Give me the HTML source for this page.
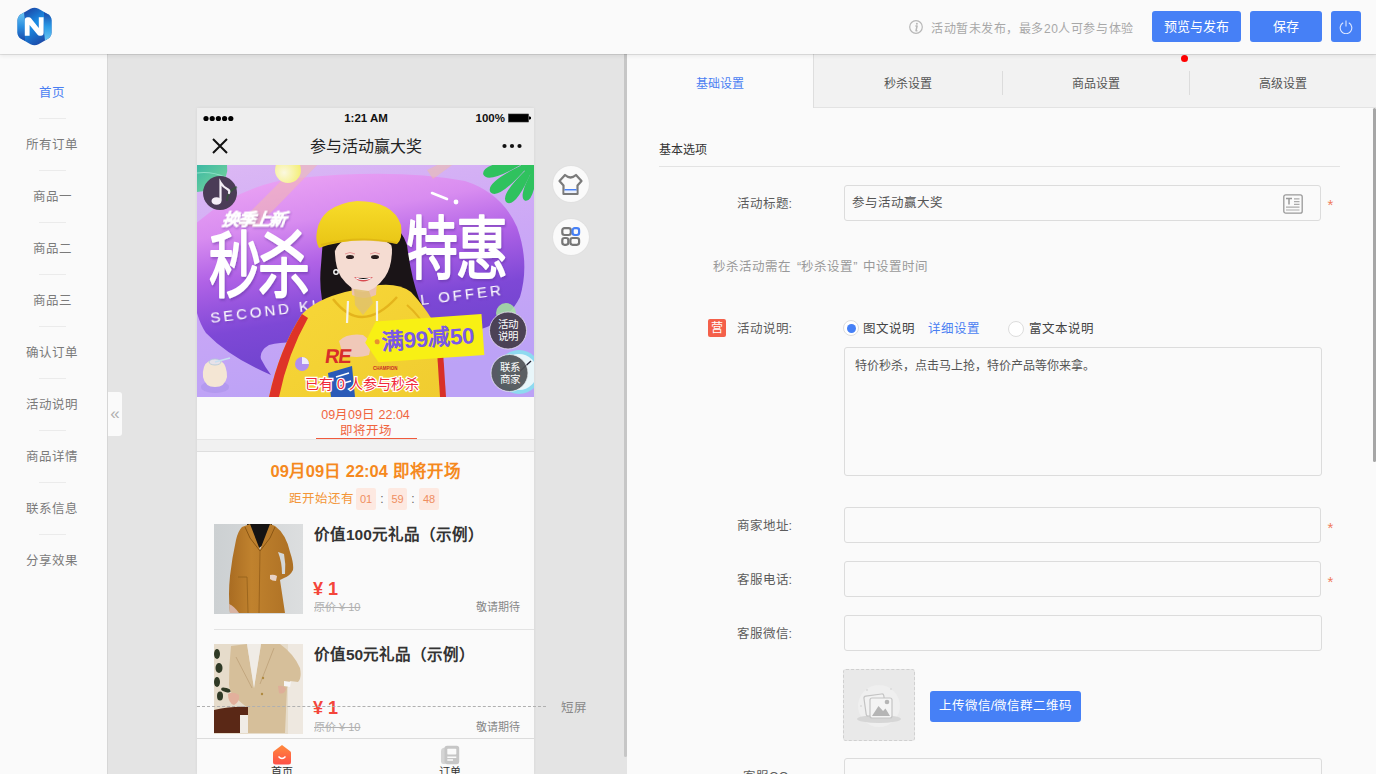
<!DOCTYPE html>
<html lang="zh-CN"><head><meta charset="utf-8">
<style>
*{box-sizing:border-box;margin:0;padding:0}
html,body{width:1376px;height:774px;overflow:hidden;background:#fafafa;font-family:"Liberation Sans",sans-serif;font-size:13px;color:#333}
.abs{position:absolute}
#header{left:0;top:0;width:1376px;height:54px;background:#fafafa;z-index:5;box-shadow:0 1px 0 rgba(0,0,0,0.09),0 2px 4px rgba(0,0,0,0.07)}
#side{left:0;top:54px;width:108px;height:720px;background:#fafafa;border-right:1px solid #d6d6d6}
.mi{position:absolute;left:0;width:104px;text-align:center;font-size:12.5px;color:#777;line-height:16px}
.md{position:absolute;left:39px;width:27px;height:1px;background:#ebebeb}
#mid{left:108px;top:54px;width:519px;height:720px;background:#e4e4e4}
#divbar{left:624px;top:54px;width:3px;height:703px;background:#c6c6c6;border-radius:0 0 2px 2px}
#right{left:627px;top:54px;width:749px;height:720px;background:#fafafa}
.btn{position:absolute;background:#4680f6;color:#fff;border-radius:3px;text-align:center;font-size:13px}
.tab{position:absolute;top:0;height:54px;line-height:60px;text-align:center;font-size:12px;color:#555}
.lbl{position:absolute;font-size:12.5px;color:#5c5c5c;text-align:right;width:120px;left:672px;line-height:16px}
.inp{position:absolute;left:844px;width:477px;height:36px;border:1px solid #dcdcdc;border-radius:3px;background:#fafafa}
.star{position:absolute;left:1327.5px;color:#f07a5a;font-size:15px;line-height:16px}
#phone{left:197px;top:108px;width:337px;height:666px;background:#fafafa;overflow:hidden;box-shadow:0 0 3px rgba(0,0,0,0.07)}
</style></head>
<body>
<!-- HEADER -->
<div id="header" class="abs">
  <svg class="abs" style="left:16px;top:7px" width="37" height="40" viewBox="0 0 37 40">
    <defs>
      <linearGradient id="lg1" x1="0.2" y1="0" x2="0.8" y2="1">
        <stop offset="0" stop-color="#1b3c9c"/><stop offset="0.45" stop-color="#1a8ee6"/><stop offset="1" stop-color="#1c3f9e"/>
      </linearGradient>
      <linearGradient id="lg2" x1="0" y1="0" x2="0" y2="1">
        <stop offset="0" stop-color="#6cc6f2"/><stop offset="0.5" stop-color="#2a8ee0"/><stop offset="1" stop-color="#1b48a8"/>
      </linearGradient>
      <linearGradient id="lg3" x1="0" y1="0" x2="0" y2="1">
        <stop offset="0" stop-color="#1b48a8"/><stop offset="0.5" stop-color="#2a9ae6"/><stop offset="1" stop-color="#6cc6f2"/>
      </linearGradient>
    </defs>
    <path d="M14.5 1.8 Q18.5 -0.2 22.5 1.8 L32 7.3 Q35.5 9.5 35.5 13.5 L35.5 25.5 Q35.5 29.5 32 31.7 L22.5 37.2 Q18.5 39.2 14.5 37.2 L5 31.7 Q1.5 29.5 1.5 25.5 L1.5 13.5 Q1.5 9.5 5 7.3 Z" fill="url(#lg1)"/>
    <path d="M1.5 13.5 Q1.5 9.5 5 7.3 L8 5.6 Q9 12 9 20 L9 33.8 L5 31.7 Q1.5 29.5 1.5 25.5 Z" fill="url(#lg2)"/>
    <path d="M35.5 25.5 Q35.5 29.5 32 31.7 L29 33.4 Q28 27 28 19 L28 5.2 L32 7.3 Q35.5 9.5 35.5 13.5 Z" fill="url(#lg3)"/>
    <path d="M8.8 13.5 Q8.8 10.2 11.5 10.2 L13 10.2 Q14.2 10.2 15 11.2 L22.8 21 L22.8 10.2 L27.6 10.2 L27.6 25.8 Q27.6 28.8 25 28.8 L23.6 28.8 Q22.4 28.8 21.6 27.8 L13.6 18 L13.6 28.8 L8.8 28.8 Z" fill="#fff"/>
  </svg>
  <svg class="abs" style="left:909px;top:20px" width="14" height="14" viewBox="0 0 14 14">
    <circle cx="7" cy="7" r="6.3" fill="none" stroke="#b8b8b8" stroke-width="1.2"/>
    <circle cx="7.9" cy="3.8" r="1" fill="#b8b8b8"/>
    <path d="M6.4 6 L8.1 6 L7 10.7 L8.4 10.7" fill="none" stroke="#b8b8b8" stroke-width="1.5" stroke-linejoin="round"/>
  </svg>
  <div class="abs" style="left:931px;top:20.5px;font-size:12px;letter-spacing:0.55px;color:#a8a8a8;line-height:16px;white-space:nowrap">活动暂未发布，最多20人可参与体验</div>
  <div class="btn" style="left:1152px;top:11px;width:89px;height:31px;line-height:31px">预览与发布</div>
  <div class="btn" style="left:1250px;top:11px;width:72px;height:31px;line-height:31px">保存</div>
  <div class="btn" style="left:1331px;top:11px;width:30px;height:31px">
    <svg class="abs" style="left:8px;top:9px" width="14" height="14" viewBox="0 0 14 14">
      <path d="M4.2 2.8 A5.8 5.8 0 1 0 9.8 2.8" fill="none" stroke="#dfe8ff" stroke-width="1.1"/>
      <path d="M7 0.5 L7 6.5" stroke="#dfe8ff" stroke-width="1.1"/>
    </svg>
  </div>
</div>

<!-- SIDEBAR -->
<div id="side" class="abs"></div>
<div class="mi" style="top:84.5px;color:#4a7ff2">首页</div>
<div class="md" style="top:118px"></div>
<div class="mi" style="top:136.5px;color:#7a7a7a">所有订单</div>
<div class="md" style="top:170px"></div>
<div class="mi" style="top:188.5px;color:#7a7a7a">商品一</div>
<div class="md" style="top:222px"></div>
<div class="mi" style="top:240.5px;color:#7a7a7a">商品二</div>
<div class="md" style="top:274px"></div>
<div class="mi" style="top:292.5px;color:#7a7a7a">商品三</div>
<div class="md" style="top:326px"></div>
<div class="mi" style="top:344.5px;color:#7a7a7a">确认订单</div>
<div class="md" style="top:378px"></div>
<div class="mi" style="top:396.5px;color:#7a7a7a">活动说明</div>
<div class="md" style="top:430px"></div>
<div class="mi" style="top:448.5px;color:#7a7a7a">商品详情</div>
<div class="md" style="top:482px"></div>
<div class="mi" style="top:500.5px;color:#7a7a7a">联系信息</div>
<div class="md" style="top:534px"></div>
<div class="mi" style="top:552.5px;color:#7a7a7a">分享效果</div>
<div class="abs" style="left:108px;top:392px;width:14px;height:44px;background:#fafafa;border-radius:0 3px 3px 0;color:#b0b0b0;font-size:17px;line-height:44px;text-align:center;z-index:3">«</div>

<!-- MIDDLE -->
<div id="mid" class="abs"></div>
<div id="divbar" class="abs"></div>

<!-- RIGHT PANEL -->
<div id="right" class="abs"></div>
<div class="abs" style="left:627px;top:54px;width:749px;height:54px;background:#f2f2f2;border-bottom:1px solid #e3e3e3"></div>
<div class="abs" style="left:627px;top:54px;width:187px;height:54px;background:#fafafa;border-right:1px solid #dedede"></div>
<div class="tab" style="left:627px;top:54px;width:186px;color:#4a7ff2">基础设置</div>
<div class="tab" style="left:814px;top:54px;width:188px">秒杀设置</div>
<div class="abs" style="left:1002px;top:71px;width:1px;height:24px;background:#dcdcdc"></div>
<div class="tab" style="left:1003px;top:54px;width:186px">商品设置</div>
<div class="abs" style="left:1189px;top:71px;width:1px;height:24px;background:#dcdcdc"></div>
<div class="tab" style="left:1190px;top:54px;width:186px">高级设置</div>
<div class="abs" style="left:1181px;top:55px;width:7px;height:7px;border-radius:50%;background:#f00"></div>
<div class="abs" style="left:1373px;top:108px;width:3px;height:354px;background:#a6a6a6;border-radius:2px"></div>

<div class="abs" style="left:659px;top:142px;font-size:12px;color:#333;line-height:16px">基本选项</div>
<div class="abs" style="left:659px;top:166px;width:681px;height:1px;background:#e3e3e3"></div>

<div class="lbl" style="top:196px">活动标题:</div>
<div class="inp" style="top:185px"></div>
<div class="abs" style="left:852px;top:195px;font-size:12.5px;color:#555;line-height:16px">参与活动赢大奖</div>
<svg class="abs" style="left:1283px;top:194px" width="20" height="20" viewBox="0 0 20 20">
  <rect x="0.8" y="0.8" width="18.4" height="18.4" rx="2" fill="none" stroke="#999" stroke-width="1.3"/>
  <path d="M3 4.5 H9 M6 4.5 V10.5" stroke="#999" stroke-width="1.5"/>
  <path d="M11 4.8 H16.5 M11 7.6 H16.5 M11 10.4 H16.5 M3 13.2 H16.5 M3 16 H16.5" stroke="#aaa" stroke-width="1.2"/>
</svg>
<div class="star" style="top:196.5px">*</div>

<div class="abs" style="left:713px;top:259px;font-size:12.5px;color:#999;line-height:16px">秒杀活动需在<span style="margin-left:6px">“</span>秒杀设置<span style="margin-right:6px">”</span>中设置时间</div>

<div class="abs" style="left:708px;top:319px;width:18px;height:18px;background:#f4604a;border-radius:2px;color:#fff;font-size:12px;line-height:18px;text-align:center">营</div>
<div class="lbl" style="top:321px">活动说明:</div>
<div class="abs" style="left:843px;top:320px;width:16px;height:16px;border-radius:50%;border:1px solid #ddd;background:#fff"></div>
<div class="abs" style="left:846.5px;top:323.5px;width:9px;height:9px;border-radius:50%;background:#4680f6"></div>
<div class="abs" style="left:863px;top:321px;font-size:12.5px;color:#444;line-height:16px">图文说明</div>
<div class="abs" style="left:928px;top:321px;font-size:12.5px;color:#4a7ff2;line-height:16px">详细设置</div>
<div class="abs" style="left:1008px;top:321px;width:16px;height:16px;border-radius:50%;border:1px solid #ddd;background:#fff"></div>
<div class="abs" style="left:1029px;top:321px;font-size:12.5px;color:#444;line-height:16px">富文本说明</div>
<div class="abs" style="left:844px;top:347px;width:478px;height:129px;border:1px solid #dcdcdc;border-radius:3px;background:#fafafa"></div>
<div class="abs" style="left:855px;top:358px;font-size:12px;color:#555;line-height:16px">特价秒杀，点击马上抢，特价产品等你来拿。</div>

<div class="lbl" style="top:518px">商家地址:</div>
<div class="inp" style="top:507px"></div>
<div class="star" style="top:519.5px">*</div>
<div class="lbl" style="top:572px">客服电话:</div>
<div class="inp" style="top:561px"></div>
<div class="star" style="top:573.5px">*</div>
<div class="lbl" style="top:626px">客服微信:</div>
<div class="inp" style="top:615px;width:478px"></div>
<div class="abs" style="left:843px;top:669px;width:72px;height:72px;border:1px dashed #d0d0d0;border-radius:3px;background:#e9e9e9"></div>
<svg class="abs" style="left:853px;top:680px" width="52" height="52" viewBox="0 0 52 52">
  <circle cx="26" cy="26" r="21" fill="#efefef"/>
  <ellipse cx="26" cy="39" rx="22" ry="4" fill="#d6d6d6"/>
  <rect x="12" y="15" width="20" height="20" rx="2" fill="#f2f2f2" stroke="#c4c4c4" stroke-width="1.2" transform="rotate(-8 22 25)"/>
  <rect x="17" y="18" width="22" height="20" rx="2" fill="#f4f4f4" stroke="#c4c4c4" stroke-width="1.2"/>
  <path d="M19 36 L25.5 26 L30 31 L32.5 28.5 L37 36 Z" fill="#b5b5b5"/>
  <circle cx="34" cy="22" r="2.3" fill="#b5b5b5"/>
  <circle cx="14" cy="10" r="0.8" fill="#ccc"/><circle cx="38" cy="9" r="0.8" fill="#ccc"/><circle cx="8" cy="26" r="0.8" fill="#ccc"/>
</svg>
<div class="btn" style="left:930px;top:691px;width:151px;height:31px;line-height:31px;font-size:12.5px">上传微信/微信群二维码</div>
<div class="lbl" style="top:769px">客服QQ:</div>
<div class="inp" style="top:758px;width:478px"></div>


<!-- PHONE -->
<div id="phone" class="abs"></div>
<!-- status + nav -->
<div class="abs" style="left:197px;top:108px;width:337px;height:57px;background:#eeeeee"></div>
<svg class="abs" style="left:203px;top:115px" width="32" height="7" viewBox="0 0 32 7">
  <circle cx="3" cy="3.5" r="2.6" fill="#000"/><circle cx="9.2" cy="3.5" r="2.6" fill="#000"/><circle cx="15.4" cy="3.5" r="2.6" fill="#000"/><circle cx="21.6" cy="3.5" r="2.6" fill="#000"/><circle cx="27.8" cy="3.5" r="2.6" fill="#000"/>
</svg>
<div class="abs" style="left:336px;top:110px;width:60px;text-align:center;font-size:11.5px;font-weight:bold;color:#111;line-height:16px">1:21 AM</div>
<div class="abs" style="left:470px;top:110px;width:35px;text-align:right;font-size:11.5px;font-weight:bold;color:#111;line-height:16px">100%</div>
<svg class="abs" style="left:508px;top:113px" width="24" height="10" viewBox="0 0 24 10">
  <rect x="0.5" y="1" width="20" height="8" fill="#000" stroke="#333" stroke-width="0.6"/>
  <path d="M21 3.3 L23 4 L23 6 L21 6.7 Z" fill="#000"/>
</svg>
<svg class="abs" style="left:212px;top:138px" width="16" height="16" viewBox="0 0 16 16">
  <path d="M1 1 L15 15 M15 1 L1 15" stroke="#111" stroke-width="2"/>
</svg>
<div class="abs" style="left:266px;top:136px;width:200px;text-align:center;font-size:16px;color:#222;line-height:22px">参与活动赢大奖</div>
<svg class="abs" style="left:500px;top:143px" width="24" height="6" viewBox="0 0 24 6">
  <circle cx="4.5" cy="3" r="2.1" fill="#111"/><circle cx="12" cy="3" r="2.1" fill="#111"/><circle cx="19.5" cy="3" r="2.1" fill="#111"/>
</svg>
<!-- banner placeholder -->
<!--BANNER-->
<svg class="abs" style="left:197px;top:165px" width="337" height="232" viewBox="0 0 337 232">
<defs>
  <linearGradient id="bgG" x1="0" y1="0" x2="0.3" y2="1">
    <stop offset="0" stop-color="#dcb8f4"/><stop offset="0.5" stop-color="#cca8f6"/><stop offset="1" stop-color="#bca2f6"/>
  </linearGradient>
  <linearGradient id="bubG" x1="0.2" y1="0" x2="0.5" y2="1">
    <stop offset="0" stop-color="#eca4f4"/><stop offset="0.25" stop-color="#d88cf0"/><stop offset="0.45" stop-color="#b062e6"/><stop offset="0.7" stop-color="#7e48d6"/><stop offset="1" stop-color="#6a42ca"/>
  </linearGradient>
  <radialGradient id="ballG" cx="0.35" cy="0.6" r="0.7">
    <stop offset="0" stop-color="#fbf8e0"/><stop offset="1" stop-color="#f4ee70"/>
  </radialGradient>
  <linearGradient id="hatG" x1="0" y1="0" x2="0" y2="1">
    <stop offset="0" stop-color="#f8dc2a"/><stop offset="1" stop-color="#e8c414"/>
  </linearGradient>
  <linearGradient id="hoodG" x1="0" y1="0" x2="1" y2="1">
    <stop offset="0" stop-color="#f8d838"/><stop offset="1" stop-color="#f0cc30"/>
  </linearGradient>
  <filter id="sh" x="-10%" y="-10%" width="130%" height="130%"><feDropShadow dx="1" dy="1.5" stdDeviation="0.8" flood-color="#5a2a9a" flood-opacity="0.45"/></filter>
</defs>
<rect width="337" height="232" fill="url(#bgG)"/>
<!-- speech bubble -->
<path d="M-5 62 Q40 20 100 13 Q200 3 268 16 Q305 28 320 62 Q333 98 323 132 Q312 154 290 162 L250 176 Q180 186 110 178 Q88 176 72 180 Q62 186 64 194 Q68 202 74 210 Q32 192 9 168 Q-2 152 -5 120 Z" fill="url(#bubG)"/>
<!-- glow streaks -->
<path d="M40 60 L105 -5 L125 -5 L60 62 Z" fill="#f4bca8" opacity="0.5"/>
<path d="M230 5 L250 -5 L262 -5 L236 14 Z" fill="#f0c0a0" opacity="0.5"/>
<!-- yellow ball -->
<circle cx="91" cy="5" r="13" fill="url(#ballG)"/>
<!-- teal leaf top-left -->
<linearGradient id="leafG" x1="0" y1="0" x2="1" y2="1"><stop offset="0" stop-color="#3cb8a4"/><stop offset="1" stop-color="#7ed89a"/></linearGradient><path d="M0 0 L30 0 Q32 12 22 20 Q12 26 0 27 Z" fill="url(#leafG)"/>
<path d="M0 8 Q14 6 28 12" stroke="#8ee0c8" stroke-width="1.2" fill="none"/>
<!-- monstera top right -->
<g fill="#2fc25e">
<circle cx="343" cy="-10" r="22"/>
<path d="M343 -10 L344.0 0.2 Q347.9 23.6 341.8 24.0 Q335.7 23.2 341.3 0.1 Z"/>
<path d="M343 -10 L340.4 4.2 Q336.6 37.6 328.2 35.7 Q320.2 32.2 336.8 3.0 Z"/>
<path d="M343 -10 L335.0 5.4 Q318.8 42.7 309.7 37.5 Q301.7 30.8 331.2 2.8 Z"/>
<path d="M343 -10 L329.7 3.0 Q301.0 35.6 293.5 27.3 Q287.6 17.8 326.8 -0.8 Z"/>
<path d="M343 -10 L326.9 -2.0 Q290.7 19.4 286.3 9.5 Q283.7 -1.0 325.4 -6.4 Z"/>
<path d="M343 -10 L326.9 -7.9 Q289.9 -0.3 289.0 -10.0 Q289.9 -19.7 326.9 -12.1 Z"/>
</g>
<!-- white dashes -->
<path d="M235 28 L250 34" stroke="#fff" stroke-width="2.6" stroke-linecap="round"/>
<circle cx="259" cy="37" r="2.4" fill="#fff"/>
<!-- music button -->
<circle cx="23" cy="28" r="17" fill="#4b3c57"/>
<path d="M30 36 Q30 26 40 22" stroke="#2d5a30" stroke-width="2" fill="none" opacity="0.6"/>
<ellipse cx="19.5" cy="36" rx="5" ry="3.8" fill="#f4eef6"/>
<path d="M23.5 35 L23.5 17.5 Q26 22 31 24.5 Q33 26 32 28" stroke="#f4eef6" stroke-width="2.2" fill="none" stroke-linecap="round"/>
<!-- 换季上新 -->
<text x="25" y="60" font-size="17" font-weight="bold" fill="#fff" stroke="#fff" stroke-width="0.5" font-style="italic" transform="skewX(-8) translate(8,0)" letter-spacing="-1.2" filter="url(#sh)">换季上新</text>
<!-- 秒杀 big -->
<text x="12" y="134" font-size="52" font-weight="normal" fill="#fff" stroke="#fff" stroke-width="1.6" stroke-linejoin="round" stroke-linecap="round" letter-spacing="-3" filter="url(#sh)" transform="translate(0,-58) scale(1,1.37)">秒杀</text>
<!-- 特惠 -->
<text x="209" y="114" font-size="52" font-weight="normal" fill="#fff" stroke="#fff" stroke-width="1.6" stroke-linejoin="round" stroke-linecap="round" letter-spacing="-2" filter="url(#sh)" transform="translate(0,-42) scale(1,1.32)">特惠</text>
<!-- SECOND KI -->
<text x="14" y="158" font-size="15" fill="#fff" letter-spacing="3" transform="rotate(-7 14 158)" filter="url(#sh)">SECOND KI</text>
<text x="224" y="140" font-size="15" fill="#fff" letter-spacing="3" transform="rotate(-7 224 140)" filter="url(#sh)">L OFFER</text>
<!-- woman -->
<path d="M126 74 Q132 52 162 50 Q200 50 210 80 Q214 112 222 134 Q230 148 226 154 L130 154 Q121 128 124 100 Z" fill="#1a1417"/>
<path d="M105 149 Q120 134 148 127 L176 121 Q200 117 214 127 Q226 140 234 153 Q242 175 247 232 L72 232 Q82 185 105 149 Z" fill="url(#hoodG)"/>
<path d="M72 232 Q82 185 105 149 L111 153 Q91 188 82 232 Z" fill="#de3328"/>
<path d="M240 186 L246 186 L249 232 L243 232 Z" fill="#d83028"/>
<path d="M136 134 Q150 152 165 152 Q182 152 200 132" stroke="#e4b41c" stroke-width="2.5" fill="none"/>
<path d="M210 140 Q222 150 232 168" stroke="#e4b41c" stroke-width="2" fill="none"/>
<path d="M151 136 L150 158 M180 136 L180 156" stroke="#f6f2ea" stroke-width="2.2"/>
<path d="M154 116 L180 116 L179 130 Q167 136 155 130 Z" fill="#ecc2b0"/>
<path d="M138 80 Q140 62 166 62 Q193 62 195 84 Q195 102 188 112 Q178 126 166 127 Q154 126 144 112 Q137 100 138 80 Z" fill="#f5dcd2"/>
<path d="M132 78 Q140 60 168 60 Q196 62 197 82 Q188 74 172 72 Q154 70 146 76 Q140 80 138 86 Z" fill="#1a1417"/>
<ellipse cx="153" cy="92" rx="4" ry="2" fill="#2a1c1c"/>
<ellipse cx="178" cy="92" rx="4" ry="2" fill="#2a1c1c"/>
<path d="M148 89 Q153 86 158 89 M173 89 Q178 86 183 89" stroke="#e89898" stroke-width="1" fill="none"/>
<path d="M157 112 Q166 121 176 112 Q166 114 157 112 Z" fill="#d84a50"/>
<path d="M159 113 Q166 116 174 113" stroke="#fff" stroke-width="1.2"/>
<circle cx="139" cy="107" r="2.2" fill="none" stroke="#f8f8f8" stroke-width="1.4"/>
<path d="M120 66 Q124 40 160 36 Q196 36 204 60 Q206 74 200 79 Q160 70 122 83 Q118 76 120 66 Z" fill="url(#hatG)"/>
<path d="M124 80 Q160 70 200 78" stroke="#d8ae10" stroke-width="2" fill="none" opacity="0.6"/>
<path d="M142 176 Q150 168 166 170 Q176 176 172 190 Q160 194 146 190 Z" fill="#f0c8b8"/>
<path d="M157 124 L172 126 L176 138 L166 150 L158 140 Z" fill="#e0c070" opacity="0.8"/>
<text x="127" y="198" font-size="20" font-weight="bold" fill="#d82e2a" transform="skewX(-8) translate(28,0)" letter-spacing="-1">RE</text>
<text x="176" y="205" font-size="4.5" font-weight="bold" fill="#c82a28">CHAMPION</text>
<path d="M131 208 L155 201 L158 232 L134 232 Z" fill="#2a5ab8"/>
<path d="M139 212 L152 208 M140 220 L154 216" stroke="#fff" stroke-width="1.5"/>
<!-- purple ball -->
<circle cx="105" cy="199" r="7" fill="#b090f0"/>
<path d="M105 192 A7 7 0 0 1 112 199 L105 199 Z" fill="#f0eef8"/>
<!-- milk bottle -->
<ellipse cx="18" cy="222" rx="14" ry="6" fill="#a890e8" opacity="0.5"/>
<path d="M6 212 Q5 200 12 196 L24 196 Q30 200 30 212 Q28 222 18 222 Q8 222 6 212 Z" fill="#f4e6d4"/>
<ellipse cx="18" cy="197" rx="6" ry="3" fill="#e6e2ea" stroke="#b0c8d8" stroke-width="0.8"/>
<path d="M18 197 L33 193" stroke="#c8e0f0" stroke-width="1.6"/>
<!-- yellow tag -->
<g transform="rotate(-4 228 173)">
  <path d="M180 153 L286 153 L286 194 L180 194 L168 173.5 Z" fill="#f8f014"/>
  <circle cx="180" cy="173.5" r="2.5" fill="#e89030"/>
  <text x="184" y="181.5" font-size="22.5" font-weight="bold" fill="#7a58e6" letter-spacing="-0.5">满99减50</text>
</g>
<!-- green bits -->
<circle cx="309" cy="148" r="10" fill="#a8e8a0" opacity="0.85"/>
<!-- clock -->
<circle cx="322" cy="207" r="22" fill="#8edaf0"/>
<circle cx="322" cy="207" r="18" fill="#e8f6fa"/>
<path d="M322 207 L334 196" stroke="#223" stroke-width="1.3"/>
<!-- 活动说明 circle -->
<circle cx="311" cy="165.5" r="18.5" fill="#4c4256" stroke="#e8e0f0" stroke-width="0.8"/>
<text x="311" y="163" font-size="10.5" fill="#fff" text-anchor="middle">活动</text>
<text x="311" y="175" font-size="10.5" fill="#fff" text-anchor="middle">说明</text>
<!-- 联系商家 circle -->
<circle cx="312.5" cy="208" r="18.5" fill="#505458" opacity="0.92" stroke="#e8eef0" stroke-width="0.8"/>
<text x="312.5" y="205.5" font-size="10.5" fill="#fff" text-anchor="middle">联系</text>
<text x="312.5" y="217.5" font-size="10.5" fill="#fff" text-anchor="middle">商家</text>
<!-- 已有0人参与秒杀 -->
<text x="165" y="223.5" font-size="14" fill="#f02a3a" text-anchor="middle" stroke="#fff" stroke-width="2.4" paint-order="stroke">已有 0 人参与秒杀</text>
</svg>
<!--/BANNER-->
<!-- countdown tab -->
<div class="abs" style="left:197px;top:397px;width:337px;height:43px;background:#fafafa"></div>
<div class="abs" style="left:197px;top:407px;width:337px;text-align:center;font-size:12.5px;color:#f0653f;line-height:16px">09月09日 22:04</div>
<div class="abs" style="left:197px;top:423px;width:337px;text-align:center;font-size:12.5px;color:#f0653f;line-height:16px">即将开场</div>
<div class="abs" style="left:316px;top:438px;width:101px;height:2px;background:#f05a3c"></div>
<div class="abs" style="left:197px;top:439px;width:337px;height:13px;background:#f1f1f1;border-top:1px solid #e6e6e6;border-bottom:1px solid #dedede"></div>
<div class="abs" style="left:197px;top:460px;width:337px;text-align:center;font-size:16.5px;font-weight:bold;color:#f5891e;line-height:22px">09月09日 22:04 即将开场</div>
<div class="abs" style="left:289px;top:491px;font-size:12.5px;color:#f39638;line-height:16px">距开始还有</div>
<div class="abs" style="left:356px;top:488px;width:20px;height:22px;background:#fde9e1;border-radius:2px;text-align:center;line-height:22px;font-size:11px;color:#ef8e60">01</div>
<div class="abs" style="left:376px;top:488px;width:12px;text-align:center;line-height:22px;font-size:12px;color:#666">:</div>
<div class="abs" style="left:388px;top:488px;width:19px;height:22px;background:#fde9e1;border-radius:2px;text-align:center;line-height:22px;font-size:11px;color:#ef8e60">59</div>
<div class="abs" style="left:407px;top:488px;width:12px;text-align:center;line-height:22px;font-size:12px;color:#666">:</div>
<div class="abs" style="left:419px;top:488px;width:20px;height:22px;background:#fde9e1;border-radius:2px;text-align:center;line-height:22px;font-size:11px;color:#ef8e60">48</div>
<!-- product 1 -->
<svg class="abs" style="left:214px;top:524px" width="89" height="90" viewBox="0 0 89 90">
  <defs><linearGradient id="c1bg" x1="0" y1="0" x2="1" y2="0"><stop offset="0" stop-color="#ccd0d2"/><stop offset="1" stop-color="#dcdedf"/></linearGradient>
  <linearGradient id="c1" x1="0" y1="0" x2="1" y2="0"><stop offset="0" stop-color="#a96c22"/><stop offset="0.35" stop-color="#c0822e"/><stop offset="1" stop-color="#ad7024"/></linearGradient></defs>
  <rect width="89" height="90" fill="url(#c1bg)"/>
  <path d="M33 0 L58 0 L56 16 L45 24 L36 14 Z" fill="#151313"/>
  <path d="M28 3 L36 0 L46 26 L56 0 L61 2 Q72 10 76 28 Q80 40 79 46 Q76 52 70 54 L66 56 L71 89 L16 89 Q14 70 16 52 Q18 34 22 16 Q24 7 28 3 Z" fill="url(#c1)"/>
  <path d="M64 28 Q68 38 68 50 L71 50 Q72 40 70 30 Z" fill="#d4d7d8"/>
  <path d="M31 3 L36 14 L46 27 L56 14 L61 3" fill="none" stroke="#8a5614" stroke-width="1"/>
  <path d="M46 27 L45 89" stroke="#925c18" stroke-width="0.8"/>
  <path d="M24 53 L33 53 L34 89" fill="none" stroke="#93601a" stroke-width="0.8"/>
  <path d="M56 51 Q60 50 63 52 L62 57 Q58 57 56 55 Z" fill="#e8d2c6"/>
  <path d="M15 80 Q20 82 25 89 L16 89 Z" fill="#d8b4a4"/>
</svg>
<div class="abs" style="left:314px;top:524px;font-size:15.5px;font-weight:bold;color:#333;line-height:22px;white-space:nowrap">价值100元礼品（示例）</div>
<div class="abs" style="left:313px;top:577px;font-size:18px;font-weight:bold;color:#f4453a;line-height:24px">¥ 1</div>
<div class="abs" style="left:314px;top:599px;font-size:11px;color:#b0b0b0;line-height:16px;text-decoration:line-through">原价 ¥ 10</div>
<div class="abs" style="left:420px;top:599px;width:100px;text-align:right;font-size:11px;color:#888;line-height:16px">敬请期待</div>
<div class="abs" style="left:214px;top:629px;width:320px;height:1px;background:#e3e3e3"></div>
<!-- product 2 -->
<svg class="abs" style="left:214px;top:644px" width="89" height="90" viewBox="0 0 89 90">
  <rect width="89" height="90" fill="#e6dccb"/>
  <rect x="74" y="0" width="15" height="90" fill="#eee8e0"/>
  <g fill="#2f3a26">
    <ellipse cx="3" cy="10" rx="3" ry="5"/><ellipse cx="5" cy="24" rx="3.5" ry="5"/><ellipse cx="3" cy="38" rx="3" ry="5"/><ellipse cx="6" cy="52" rx="3" ry="4.5"/>
    <ellipse cx="12" cy="46" rx="5" ry="2" transform="rotate(15 12 46)"/>
  </g>
  <path d="M17 2 L33 0 L40 44 L47 0 L66 0 Q80 10 86 24 Q88 34 84 38 L76 37 L73 44 L71 89 L34 89 L34 64 Q26 58 22 54 Q15 48 15 40 Q15 20 17 2 Z" fill="#d6bf9a"/>
  <path d="M33 0 L47 0 L40 44 Z" fill="#f0ece6"/>
  <path d="M22 13 L38 44 M60 4 L46 40" stroke="#bfa47c" stroke-width="0.9" fill="none"/>
  <path d="M0 66 Q18 62 34 63 L34 71 L26 71 L26 89 L0 89 Z" fill="#5a2816"/>
  <rect x="26" y="71" width="8" height="18" fill="#f0ece6"/>
  <path d="M14 50 Q19 47 25 51 Q26 58 20 61 Q14 59 14 50 Z" fill="#e2b09c"/>
  <path d="M70 37 L77 38 L76 43 L70 42 Z" fill="#f6f6f6"/>
  <path d="M64 42 Q70 41 72 45 Q70 51 65 49 Z" fill="#deae98"/>
  <circle cx="49" cy="34" r="1.2" fill="#b08a40"/><circle cx="48" cy="50" r="1.2" fill="#b08a40"/>
</svg>
<div class="abs" style="left:314px;top:644px;font-size:15.5px;font-weight:bold;color:#333;line-height:22px;white-space:nowrap">价值50元礼品（示例）</div>
<div class="abs" style="left:313px;top:696px;font-size:18px;font-weight:bold;color:#f4453a;line-height:24px">¥ 1</div>
<div class="abs" style="left:314px;top:719px;font-size:11px;color:#b0b0b0;line-height:16px;text-decoration:line-through">原价 ¥ 10</div>
<div class="abs" style="left:420px;top:719px;width:100px;text-align:right;font-size:11px;color:#888;line-height:16px">敬请期待</div>
<!-- tab bar -->
<div class="abs" style="left:197px;top:738px;width:337px;height:36px;background:#fafafa;border-top:1px solid #dcdcdc"></div>
<svg class="abs" style="left:272px;top:744px" width="20" height="21" viewBox="0 0 20 21">
  <defs><linearGradient id="hg" x1="0" y1="0" x2="0" y2="1"><stop offset="0" stop-color="#ff8a3c"/><stop offset="1" stop-color="#ff5048"/></linearGradient></defs>
  <path d="M10 1 L18.5 7.5 Q19 8 19 9 L19 18 Q19 20.5 16.5 20.5 L3.5 20.5 Q1 20.5 1 18 L1 9 Q1 8 1.5 7.5 Z" fill="url(#hg)"/>
  <path d="M6.5 12.5 Q10 16.5 13.5 12.5" fill="none" stroke="#fff" stroke-width="1.4"/>
</svg>
<div class="abs" style="left:262px;top:765px;width:40px;text-align:center;font-size:11px;color:#333;line-height:14px">首页</div>
<svg class="abs" style="left:440px;top:745px" width="20" height="20" viewBox="0 0 20 20">
  <path d="M5 2.5 L3 3 Q1 3.6 1 6 L1 16.5 Q1 18.8 3.2 19 L5 19 Z" fill="#d4d4d4"/>
  <rect x="4.5" y="0.8" width="14.7" height="18.4" rx="2.6" fill="#c6c6c6"/>
  <rect x="7.3" y="3.8" width="9" height="5.6" rx="0.6" fill="#fafafa"/>
  <path d="M7.3 12.2 H16.3 M7.3 15 H13" stroke="#fafafa" stroke-width="1.4"/>
</svg>
<div class="abs" style="left:430px;top:765px;width:40px;text-align:center;font-size:11px;color:#333;line-height:14px">订单</div>
<!-- short screen dashed -->
<div class="abs" style="left:197px;top:706px;width:349px;height:0;border-top:1px dashed #b0b0b0"></div>
<div class="abs" style="left:561px;top:700px;font-size:12.5px;color:#888;line-height:16px">短屏</div>
<!-- side buttons -->
<div class="abs" style="left:552.5px;top:166px;width:36px;height:36px;border-radius:50%;background:#fafafa;box-shadow:0 0 2px rgba(0,0,0,0.06)"></div>
<svg class="abs" style="left:558px;top:173px" width="25" height="23" viewBox="0 0 25 23">
  <path d="M7 2 Q12.5 7 18 2 L23.5 8 L19.5 12.5 L19.5 21 L5.5 21 L5.5 12.5 L1.5 8 Z" fill="#fafafa" stroke="#7a7a7a" stroke-width="2.2" stroke-linejoin="round"/>
  <path d="M6.5 16.8 H18.5" stroke="#4680f6" stroke-width="1.6"/>
  <path d="M6.5 18.8 H18.5" stroke="#e8eefc" stroke-width="2"/>
</svg>
<div class="abs" style="left:552.5px;top:218.5px;width:36px;height:36px;border-radius:50%;background:#fafafa;box-shadow:0 0 2px rgba(0,0,0,0.06)"></div>
<svg class="abs" style="left:560px;top:226px" width="22" height="21" viewBox="0 0 22 21">
  <rect x="2.3" y="2.2" width="8.5" height="6.8" rx="2.2" fill="none" stroke="#777" stroke-width="2.2"/>
  <rect x="12.6" y="2.2" width="6.5" height="6.8" rx="2.2" fill="none" stroke="#4680f6" stroke-width="2.2"/>
  <rect x="2.3" y="12" width="6" height="6.8" rx="2.2" fill="none" stroke="#777" stroke-width="2.2"/>
  <rect x="10.4" y="12" width="8.7" height="6.8" rx="2.2" fill="none" stroke="#777" stroke-width="2.2"/>
</svg>


</body></html>
